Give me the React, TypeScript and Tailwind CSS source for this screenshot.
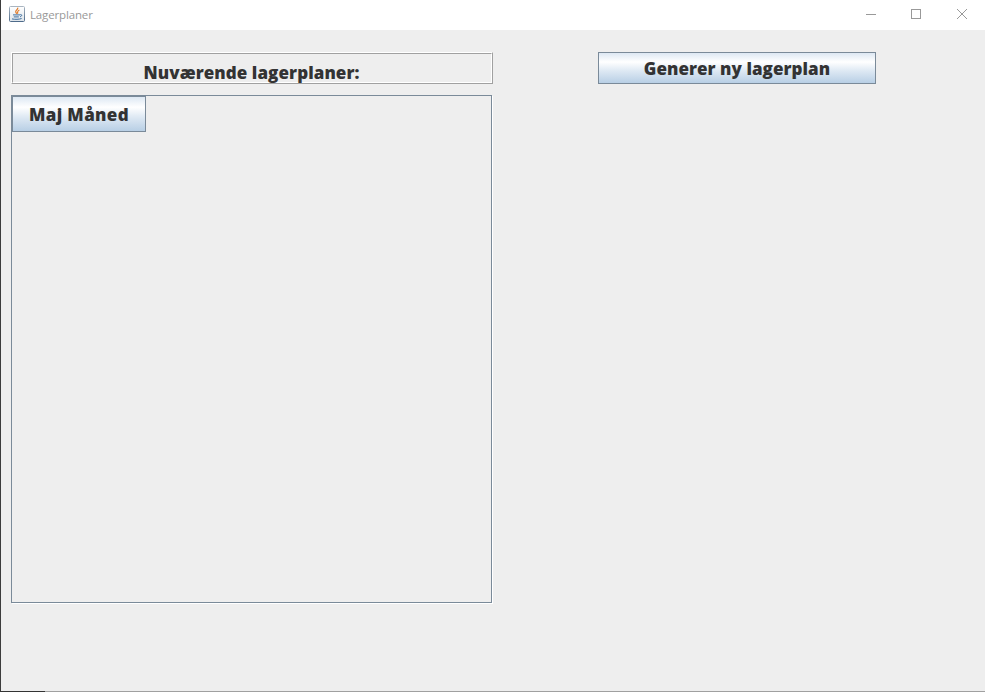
import React from "react";

const heavy = "font-['Open_Sans','Noto_Sans',sans-serif] font-extrabold text-[#333333] whitespace-nowrap";
const metal =
  "flex items-center justify-center border border-[#7a8a99] bg-[linear-gradient(to_bottom,#dde8f3_0%,#ffffff_30%,#dde8f3_60%,#b8cfe5_100%)]";

function JavaIcon() {
  return (
    <svg width="16" height="16" viewBox="0 0 16 16" fill="none">
      <defs>
        <linearGradient id="tile" x1="0" y1="0" x2="0" y2="1">
          <stop offset="0" stopColor="#ffffff" />
          <stop offset="1" stopColor="#dce3e9" />
        </linearGradient>
        <linearGradient id="edge" x1="0" y1="0" x2="0" y2="1">
          <stop offset="0" stopColor="#a9b5c1" />
          <stop offset="1" stopColor="#4e6b8a" />
        </linearGradient>
      </defs>
      <rect x="0.5" y="0.5" width="15" height="15" rx="1" fill="url(#tile)" stroke="url(#edge)" />
      <path d="M8.7 1.6c.8 2-2.9 2.6-1.9 4.6.3.6.8 1 .7 1.7M10.4 4c-2.7 1-1.6 2-1.8 3.7" stroke="#e07a28" strokeWidth="1.2" />
      <path d="M4 8.9h7M4.8 10.9h5M3 12.9c2.8.7 7.4.5 9.6-.4M11.2 8.7c2-.6 2.2 1.4-.2 2.1" stroke="#3f6f9f" strokeWidth="1" />
    </svg>
  );
}

function TitleBar() {
  return (
    <header className="flex h-[30px] shrink-0 items-start justify-between bg-white pl-2">
      <div className="flex items-start gap-[5px] pt-[6px]">
        <JavaIcon />
        <span className="pt-px font-['Open_Sans',sans-serif] text-[11.5px] leading-4 tracking-[-0.15px] text-[#999999]">
          Lagerplaner
        </span>
      </div>
      <div className="flex pt-[9px] pr-[18px] text-[#999999]">
        <svg className="mr-[35px]" width="10" height="10" viewBox="0 0 10 10">
          <path d="M0 5.5H10" stroke="currentColor" />
        </svg>
        <svg className="mr-9" width="10" height="10" viewBox="0 0 10 10" fill="none">
          <rect x="0.5" y="0.5" width="9" height="9" stroke="currentColor" />
        </svg>
        <svg width="10" height="10" viewBox="0 0 10 10">
          <path d="M0 0L10 10M10 0L0 10" stroke="currentColor" />
        </svg>
      </div>
    </header>
  );
}

export default function App() {
  return (
    <div className="flex h-[692px] w-[985px] flex-col overflow-hidden bg-[#eeeeee]">
      <div className="flex min-h-0 flex-1 flex-col border-l border-[#3c3c3c]">
        <TitleBar />
        <main className="flex flex-1 items-start pl-[10px] pt-[22px]">
          <section className="flex w-[482px] flex-col gap-[11px]">
            <div className="h-8 border border-t-white border-l-white border-r-[#a0a0a0] border-b-[#a0a0a0]">
              <div className="flex h-[30px] items-center justify-center border border-t-[#a0a0a0] border-l-[#a0a0a0] border-r-white border-b-white pt-[10px] pr-px">
                <h1 className={`${heavy} text-[17px] leading-6 tracking-[0.08px]`}>Nuværende lagerplaner:</h1>
              </div>
            </div>
            <div className="h-[508px] w-[481px] border border-[#7a8a99] shadow-[1px_1px_0_0_#ffffff]">
              <button className={`${metal} h-9 w-[134px] pt-0.5`}>
                <span className={`${heavy} text-[17px] leading-6 tracking-[0.35px]`}>Maj Måned</span>
              </button>
            </div>
          </section>
          <button className={`${metal} ml-[105px] h-8 w-[278px] pt-0.5`}>
            <span className={`${heavy} text-[17px] leading-6 tracking-[0.05px]`}>Generer ny lagerplan</span>
          </button>
        </main>
      </div>
      <footer className="flex h-px shrink-0 bg-[#a0a0a0]">
        <div className="h-px w-[45px] bg-[#333333]" />
      </footer>
    </div>
  );
}
